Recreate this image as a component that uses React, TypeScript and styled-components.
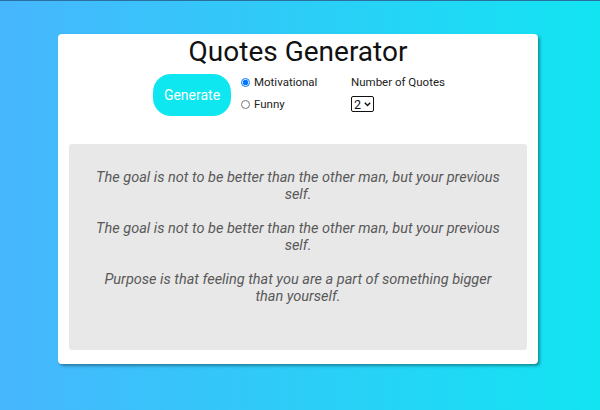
import React, { useState } from "react";
import styled, { createGlobalStyle } from "styled-components";

const Global = createGlobalStyle`
  html, body { margin: 0; padding: 0; }
  body {
    width: 600px;
    height: 410px;
    overflow: hidden;
    font-family: Roboto, "Liberation Sans", sans-serif;
    background: linear-gradient(to right, #47b6fd 0%, #12e4f2 100%);
    border-top: 1px solid #2a6f9e;
    box-sizing: border-box;
  }
`;

const Page = styled.div`
  padding: 33px 0 0 58px;
`;

const Card = styled.div`
  width: 480px;
  height: 330px;
  box-sizing: border-box;
  background: #fff;
  border-radius: 4px;
  box-shadow: 2px 2px 3px rgba(0, 0, 0, 0.35);
  padding: 0 11px;
  display: flex;
  flex-direction: column;
`;

const Title = styled.h1`
  margin: 0;
  font-weight: 400;
  font-size: 28px;
  line-height: 36px;
  color: #111;
  text-align: center;
`;

const Controls = styled.div`
  display: flex;
  justify-content: center;
  align-items: flex-start;
  margin-top: 4px;
`;

const GenerateButton = styled.button`
  width: 78px;
  height: 42px;
  margin-right: 10px;
  border: none;
  border-radius: 18px;
  background: #0ee7ef;
  color: #fff;
  font-family: Roboto, "Liberation Sans", sans-serif;
  font-size: 14px;
  padding: 0;
  cursor: pointer;
`;

const RadioGroup = styled.div`
  display: flex;
  flex-direction: column;
  gap: 6px;
  width: 110px;
`;

const RadioLabel = styled.label`
  display: flex;
  align-items: center;
  gap: 4px;
  font-size: 11.5px;
  line-height: 16px;
  color: #222;
  white-space: nowrap;
  input {
    margin: 0;
    width: 9px;
    height: 9px;
  }
`;

const NumberGroup = styled.div`
  display: flex;
  flex-direction: column;
  align-items: flex-start;
  gap: 6px;
  width: 92px;
`;

const NumberLabel = styled.span`
  font-size: 11.5px;
  line-height: 16px;
  color: #222;
  white-space: nowrap;
`;

const SelectWrap = styled.div`
  position: relative;
  width: 23px;
  height: 16px;
`;

const Select = styled.select`
  display: block;
  appearance: none;
  -webkit-appearance: none;
  font-family: Roboto, "Liberation Sans", sans-serif;
  font-size: 12.5px;
  width: 23px;
  height: 16px;
  box-sizing: border-box;
  padding: 0 0 0 2px;
  margin: 0;
  border: 1px solid #111;
  border-radius: 2px;
  background: #fff;
  color: #111;
`;

const Chevron = styled.svg`
  position: absolute;
  right: 3px;
  top: 6px;
  width: 7px;
  height: 5px;
  pointer-events: none;
`;

const QuoteBox = styled.div`
  margin-top: 28px;
  height: 206px;
  box-sizing: border-box;
  background: #e8e8e8;
  border-radius: 3px;
  padding: 25px 26px;
  display: flex;
  flex-direction: column;
  gap: 17px;
`;

const Quote = styled.p`
  margin: 0;
  font-style: italic;
  font-size: 14.5px;
  line-height: 17px;
  color: #595959;
  text-align: center;
`;

const quotes = [
  "The goal is not to be better than the other man, but your previous self.",
  "The goal is not to be better than the other man, but your previous self.",
  "Purpose is that feeling that you are a part of something bigger than yourself.",
];

export default function App() {
  const [kind, setKind] = useState("motivational");
  const [count, setCount] = useState("2");
  return (
    <>
      <Global />
      <Page>
        <Card>
          <Title>Quotes Generator</Title>
          <Controls>
            <GenerateButton>Generate</GenerateButton>
            <RadioGroup>
              <RadioLabel>
                <input
                  type="radio"
                  name="kind"
                  checked={kind === "motivational"}
                  onChange={() => setKind("motivational")}
                />
                Motivational
              </RadioLabel>
              <RadioLabel>
                <input
                  type="radio"
                  name="kind"
                  checked={kind === "funny"}
                  onChange={() => setKind("funny")}
                />
                Funny
              </RadioLabel>
            </RadioGroup>
            <NumberGroup>
              <NumberLabel>Number of Quotes</NumberLabel>
              <SelectWrap>
                <Select value={count} onChange={(e) => setCount(e.target.value)}>
                  <option>1</option>
                  <option>2</option>
                  <option>3</option>
                </Select>
                <Chevron viewBox="0 0 7 5">
                  <path d="M0.8 0.8 L3.5 3.6 L6.2 0.8" fill="none" stroke="#111" strokeWidth="1.4" />
                </Chevron>
              </SelectWrap>
            </NumberGroup>
          </Controls>
          <QuoteBox>
            {quotes.map((q, i) => (
              <Quote key={i}>{q}</Quote>
            ))}
          </QuoteBox>
        </Card>
      </Page>
    </>
  );
}
